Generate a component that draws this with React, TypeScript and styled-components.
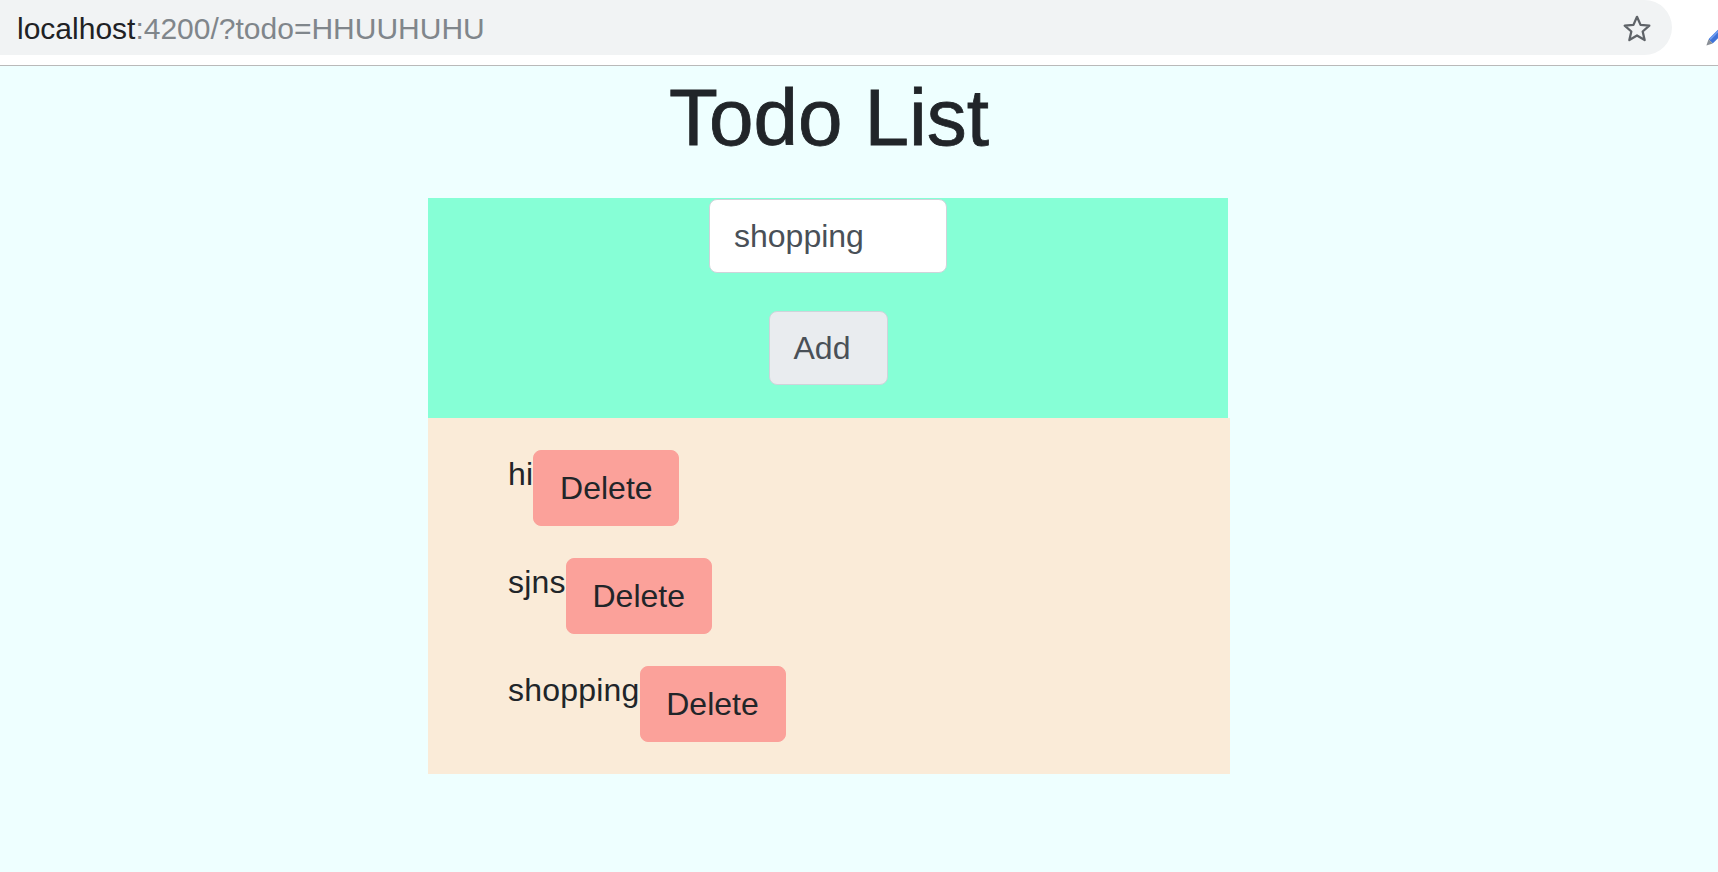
import React from "react";
import styled, { createGlobalStyle } from "styled-components";

const GlobalStyle = createGlobalStyle`
  html, body {
    margin: 0;
    padding: 0;
    background: #eeffff;
    font-family: "Liberation Sans", Arial, sans-serif;
    overflow: hidden;
  }
  * { box-sizing: border-box; }
`;

const TopBar = styled.header`
  display: flex;
  align-items: flex-start;
  height: 66px;
  background: #ffffff;
  border-bottom: 1px solid #b9b9b9;
  overflow: hidden;
`;

const Omnibox = styled.div`
  display: flex;
  align-items: center;
  flex: 0 0 1672px;
  height: 55px;
  padding: 2px 0 0 17px;
  background: #f1f3f4;
  border-radius: 0 28px 28px 0;
`;

const Url = styled.span`
  flex: 1;
  font-size: 30px;
  color: #80868b;
  white-space: nowrap;
`;

const Host = styled.span`
  color: #202124;
`;

const StarButton = styled.span`
  display: flex;
  width: 36px;
  height: 36px;
  margin-right: 17px;
  align-items: center;
  justify-content: center;
`;

const PenSlot = styled.span`
  display: flex;
  margin: 20px 0 0 30px;
  flex: 0 0 auto;
`;

const Page = styled.main`
  width: 1658px;
  display: flex;
  flex-direction: column;
  align-items: center;
`;

const Title = styled.h1`
  margin: 4px 0 32px;
  font-size: 80px;
  line-height: 96px;
  font-weight: 400;
  color: #212529;
  -webkit-text-stroke: 0.8px #212529;
`;

const Board = styled.section`
  width: 802px;
  display: flex;
  flex-direction: column;
`;

const AddForm = styled.form`
  width: 800px;
  height: 220px;
  display: flex;
  flex-direction: column;
  align-items: center;
  padding: 1px 0 33px;
  background: #86ffd6;
`;

const TodoInput = styled.input`
  width: 238px;
  height: 74px;
  padding: 0 24px;
  font-family: inherit;
  font-size: 32px;
  color: #495057;
  background: #ffffff;
  border: 1px solid #ced4da;
  border-radius: 8px;
  outline: none;
`;

const Button = styled.button<{ $variant: "add" | "delete" }>`
  display: flex;
  align-items: center;
  font-family: inherit;
  font-size: 32px;
  line-height: 48px;
  border-radius: 8px;
  cursor: pointer;
  ${(p) =>
    p.$variant === "add"
      ? `
    justify-content: flex-start;
    padding: 0 0 0 24px;
    width: 119px;
    height: 74px;
    margin-top: 38px;
    background: #e9ecef;
    color: #495057;
    border: 1px solid #ced4da;
  `
      : `
    justify-content: center;
    padding: 0;
    width: 146px;
    height: 76px;
    background: #fba19a;
    color: #212529;
    border: 1px solid #fba19a;
  `}
`;

const List = styled.ul`
  margin: 0;
  width: 802px;
  height: 356px;
  list-style: none;
  display: flex;
  flex-direction: column;
  gap: 32px;
  padding: 32px 0 32px 80px;
  background: #faebd8;
`;

const Item = styled.li`
  display: flex;
  align-items: flex-start;
`;

const Label = styled.span`
  font-size: 32px;
  line-height: 48px;
  color: #212529;
  letter-spacing: 0.2px;
`;

const StarIcon = () => (
  <svg width="34" height="34" viewBox="0 0 24 24" fill="none">
    <path
      d="M12 3.4l2.5 5.7 6.2.55-4.7 4.1 1.4 6.05L12 16.6l-5.4 3.2 1.4-6.05-4.7-4.1 6.2-.55z"
      stroke="#5f6368"
      strokeWidth="1.6"
      strokeLinejoin="round"
    />
  </svg>
);

const PenIcon = () => (
  <svg width="30" height="30" viewBox="0 0 30 30">
    <g transform="rotate(-45 15 15)">
      <rect x="6" y="12" width="22" height="6" rx="1" fill="#3f73d8" />
      <polygon points="0,15 6,12 6,18" fill="#8a8f96" />
      <rect x="7" y="12" width="20" height="2" fill="#6e9cf0" />
    </g>
  </svg>
);

const todos = ["hi", "sjns", "shopping"];

export default function App() {
  return (
    <>
      <GlobalStyle />
      <TopBar>
        <Omnibox>
          <Url>
            <Host>localhost</Host>:4200/?todo=HHUUHUHU
          </Url>
          <StarButton>
            <StarIcon />
          </StarButton>
        </Omnibox>
        <PenSlot>
          <PenIcon />
        </PenSlot>
      </TopBar>
      <Page>
        <Title>Todo List</Title>
        <Board>
          <AddForm onSubmit={(e) => e.preventDefault()}>
            <TodoInput defaultValue="shopping" />
            <Button $variant="add" type="submit">
              Add
            </Button>
          </AddForm>
          <List>
            {todos.map((t) => (
              <Item key={t}>
                <Label>{t}</Label>
                <Button $variant="delete" type="button">
                  Delete
                </Button>
              </Item>
            ))}
          </List>
        </Board>
      </Page>
    </>
  );
}
